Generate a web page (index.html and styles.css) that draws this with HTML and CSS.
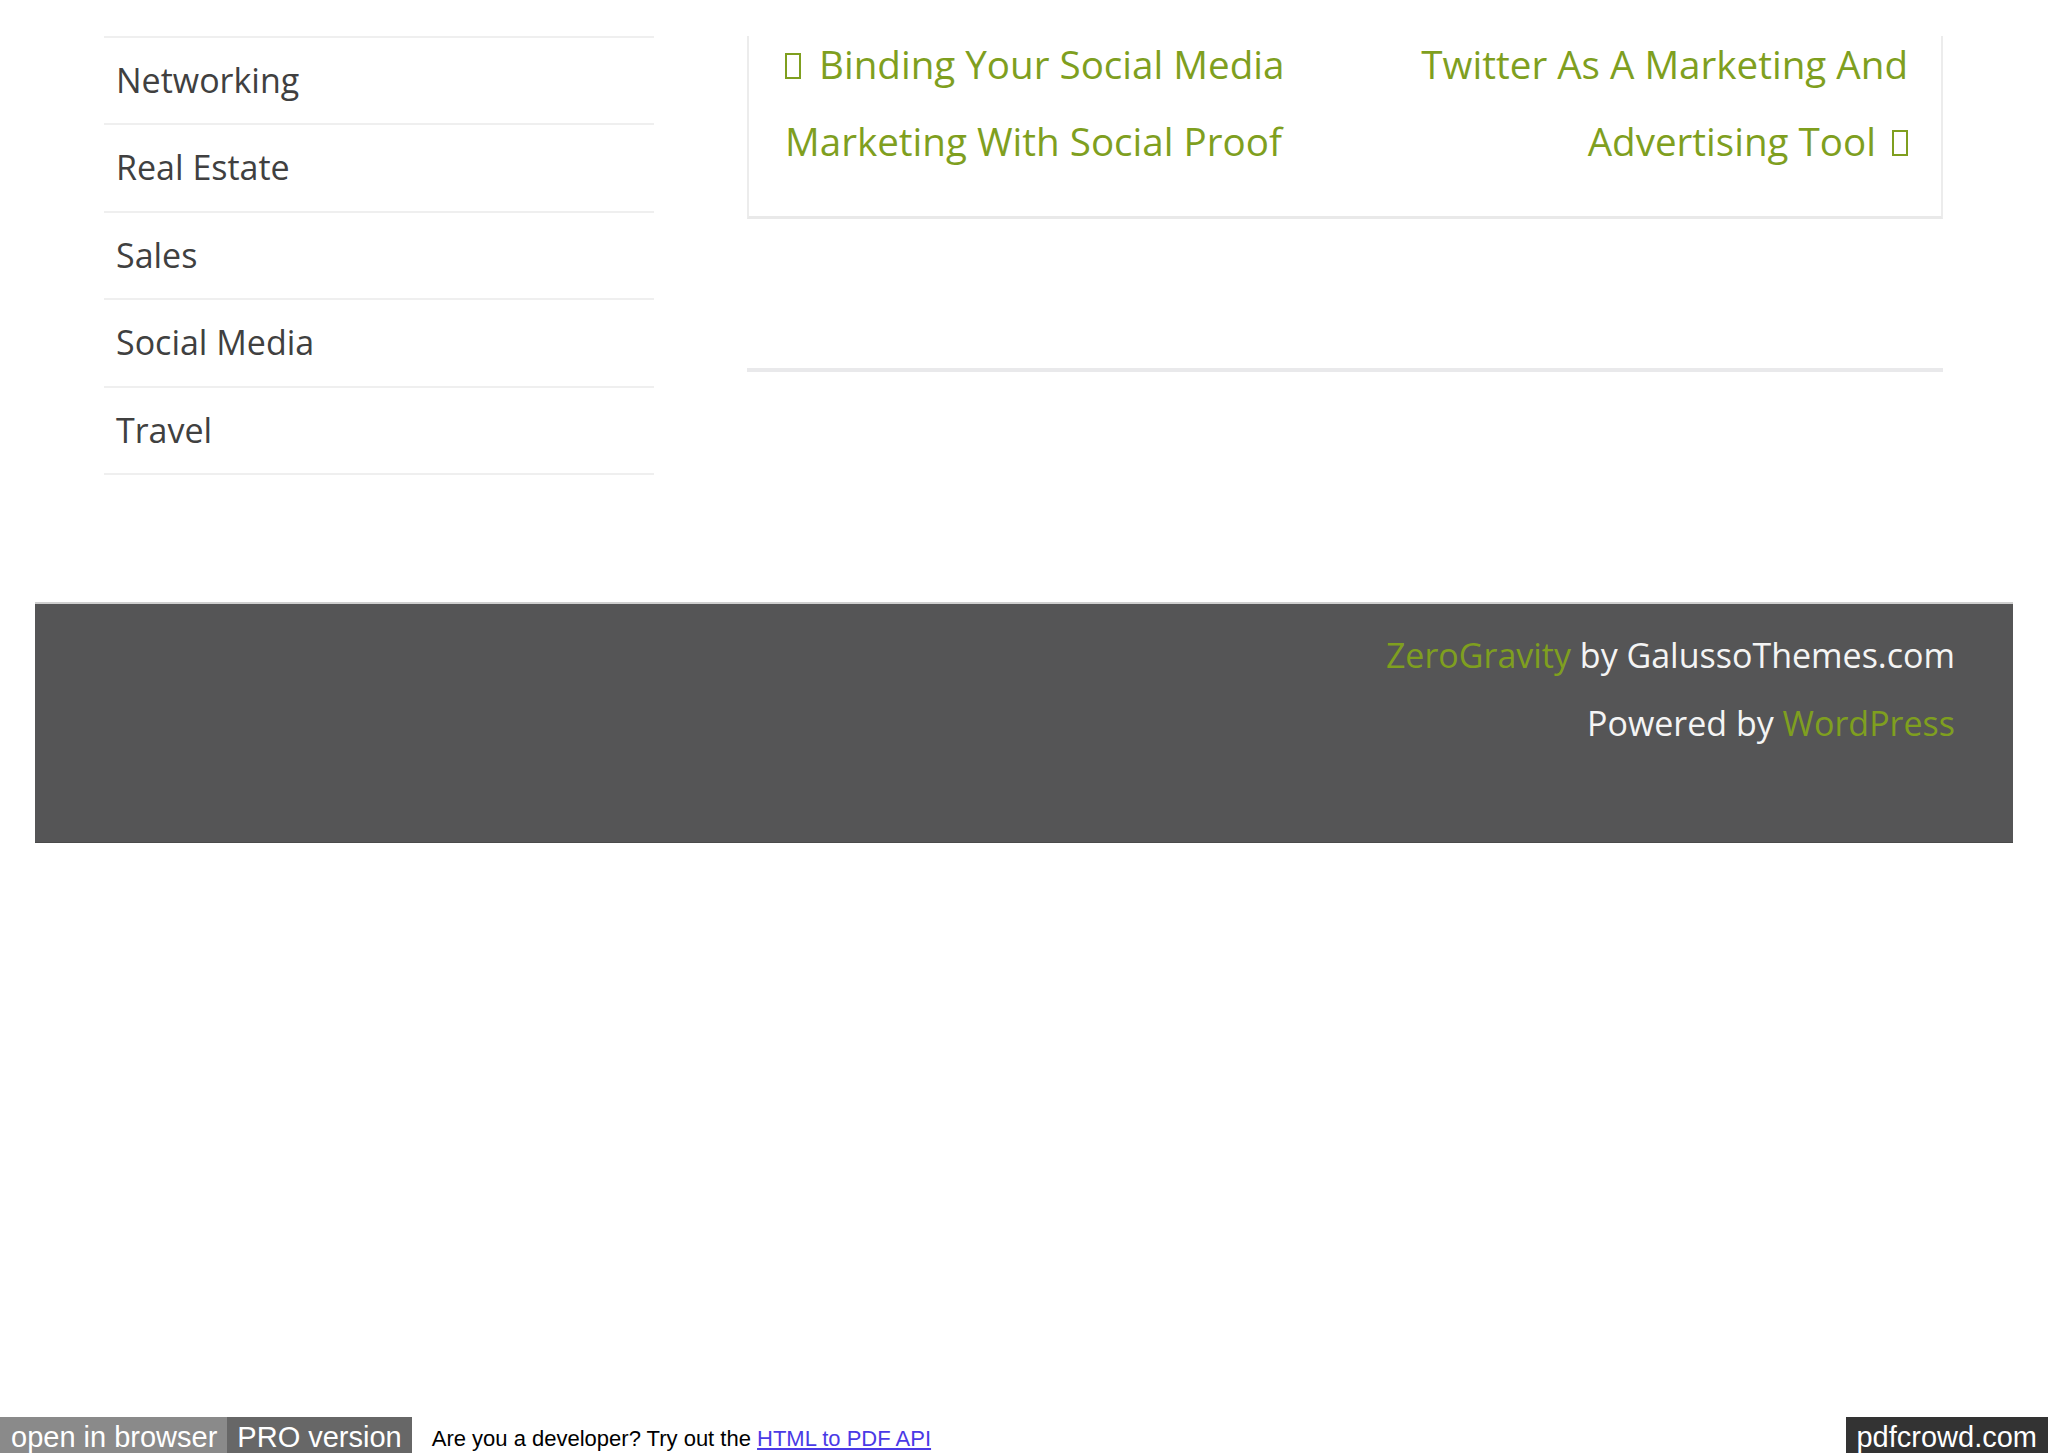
FILE: index.html
```html
<!DOCTYPE html>
<html>
<head>
<meta charset="utf-8">
<title>ZeroGravity</title>
<link rel="stylesheet" href="styles.css">
</head>
<body>
<div class="screen">
  <div class="page">
    <aside class="sidebar">
      <ul class="cats">
        <li>Networking</li>
        <li>Real Estate</li>
        <li>Sales</li>
        <li>Social Media</li>
        <li>Travel</li>
      </ul>
    </aside>
    <main class="main">
      <div class="clip">
        <nav class="post-nav">
          <a class="prev" href="#"><span class="tofu tofu-l"></span>Binding Your Social Media Marketing With Social Proof</a>
          <a class="next" href="#">Twitter As A Marketing And Advertising Tool<span class="tofu tofu-r"></span></a>
        </nav>
      </div>
      <div class="rule"></div>
    </main>
  </div>
  <footer class="site-footer">
    <p><a href="#">ZeroGravity</a> by GalussoThemes.com</p>
    <p>Powered by <a href="#">WordPress</a></p>
  </footer>
  <div class="banner">
    <span class="btn btn-open">open in browser</span><span class="btn btn-pro">PRO version</span>
    <span class="dev">Are you a developer? Try out the <a href="#">HTML to PDF API</a></span>
    <span class="brand">pdfcrowd.com</span>
  </div>
</div>
</body>
</html>
```

FILE: styles.css
```css
html, body {
  margin: 0;
  padding: 0;
  background: #ffffff;
}
body {
  font-family: "Open Sans", "DejaVu Sans", sans-serif;
}
.screen {
  width: 2048px;
  min-height: 1453px;
  display: flex;
  flex-direction: column;
}
.page {
  display: flex;
  padding-top: 36px;
  padding-left: 104px;
}
.sidebar {
  width: 550px;
  flex: none;
}
.cats {
  list-style: none;
  margin: 0;
  padding: 0;
  border-top: 2px solid #efefef;
}
.cats li {
  height: 85.4px;
  line-height: 84px;
  border-bottom: 2px solid #efefef;
  padding-left: 12px;
  font-size: 34px;
  color: #404040;
}
.main {
  margin-left: 93px;
  width: 1196px;
  flex: none;
}
.clip {
  overflow: hidden;
}
.post-nav {
  margin-top: -10px;
  display: flex;
  border-left: 2px solid #ececec;
  border-right: 2px solid #ececec;
  border-bottom: 3px solid #e9e9e9;
  padding: 0 33px 36px 36px;
}
.post-nav a {
  flex: 1 1 0;
  font-size: 38.6px;
  line-height: 77px;
  color: #7f9f1f;
  text-decoration: none;
}
.post-nav .next {
  text-align: right;
}
.tofu {
  display: inline-block;
  width: 12px;
  height: 22px;
  border: 2px solid #7f9f1f;
  vertical-align: baseline;
}
.tofu-l {
  margin-right: 18px;
}
.tofu-r {
  margin-left: 16px;
}
.rule {
  margin-top: 149px;
  height: 4px;
  background: #e9e9eb;
}
.site-footer {
  margin-top: 127px;
  margin-left: 35px;
  width: 1978px;
  box-sizing: border-box;
  background: #555556;
  border-top: 2px solid #cfcfcf;
  border-bottom: 1px solid #4a4a4a;
  padding: 17px 58px 85px 0;
  text-align: right;
  color: #f4f4f4;
  font-size: 34px;
  line-height: 68px;
}
.site-footer p {
  margin: 0;
}
.site-footer a {
  color: #7f9f1f;
  text-decoration: none;
}
.banner {
  margin-top: auto;
  height: 36px;
  display: flex;
  align-items: stretch;
  font-family: "Liberation Sans", Arial, sans-serif;
}
.btn {
  color: #ffffff;
  font-size: 29px;
  line-height: 40px;
  padding: 0 10px 0 11px;
  white-space: nowrap;
}
.btn-open {
  background: #8a8a8a;
}
.btn-pro {
  background: #676767;
  padding: 0 10px 0 10px;
}
.dev {
  margin-left: 20px;
  font-size: 22px;
  line-height: 43px;
  color: #000000;
}
.dev a {
  color: #4a3ae6;
}
.brand {
  margin-left: auto;
  background: #333333;
  color: #ffffff;
  font-size: 29px;
  line-height: 40px;
  padding: 0 11px 0 10px;
}
```
